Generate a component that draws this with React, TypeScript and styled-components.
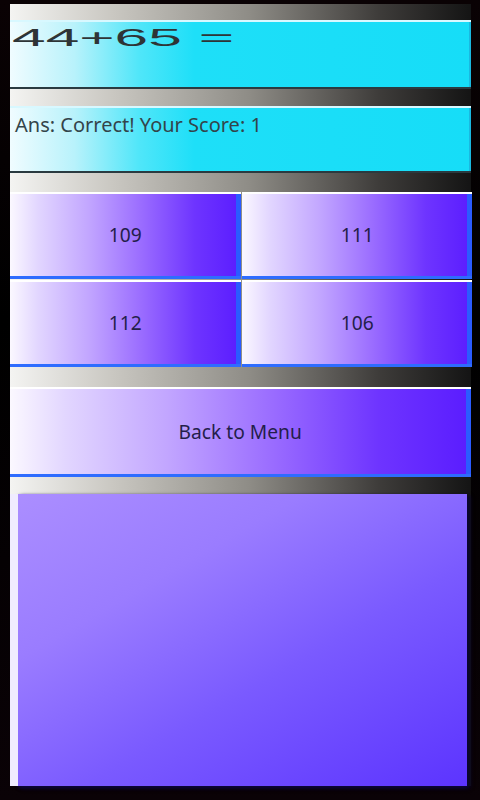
import React from 'react';
import styled, { createGlobalStyle } from 'styled-components';

const GlobalStyle = createGlobalStyle`
  html, body {
    margin: 0;
    padding: 0;
    background: #000;
  }
  body {
    font-family: "Noto Sans", "DejaVu Sans", sans-serif;
  }
`;

const Frame = styled.div`
  width: 480px;
  height: 800px;
  box-sizing: border-box;
  padding: 4px 9px 0 10px;
  background: linear-gradient(to bottom, #0a0204 0%, #000 40%, #0a0206 100%);
  overflow: hidden;
`;

const Screen = styled.div`
  height: 782px;
  display: flex;
  flex-direction: column;
  padding-top: 16px;
  box-sizing: border-box;
  background: linear-gradient(to right, #f4f4f2 0%, #cac8c2 22%, #8e8c86 52%, #3e3c3a 80%, #141414 100%);
`;

const InfoPanel = styled.div<{ $h: number }>`
  height: ${(p) => p.$h}px;
  flex-shrink: 0;
  box-sizing: border-box;
  background: linear-gradient(to right, #f0fcff 0%, #b8f2fb 14%, #50e6f9 28%, #1edff8 40%, #16ddf8 100%);
  box-shadow: inset 0 2px 0 #d8f8ff, inset 0 -2px 0 #2a3a40, inset -2px 0 0 #1ab8e0;
  overflow: hidden;
`;

const Question = styled.div`
  display: inline-block;
  margin: 4px 0 0 2px;
  font-family: "Liberation Sans", Arial, sans-serif;
  font-size: 24px;
  line-height: 28px;
  color: #2e3436;
  transform: scaleX(2.52);
  transform-origin: left center;
  white-space: pre;
`;

const Answer = styled.div`
  padding: 5px 0 0 5px;
  font-size: 20px;
  line-height: 28px;
  color: #33444a;
  white-space: nowrap;
`;

const Gap = styled.div<{ $h: number }>`
  height: ${(p) => p.$h}px;
  flex-shrink: 0;
`;

const Grid = styled.div`
  display: grid;
  grid-template-columns: 231px 230px;
  grid-template-rows: 87px 87px;
  column-gap: 1px;
  row-gap: 1px;
  flex-shrink: 0;
`;

const Button = styled.button<{ $h?: number }>`
  height: ${(p) => (p.$h ? `${p.$h}px` : '100%')};
  width: 100%;
  flex-shrink: 0;
  border: none;
  padding: 0;
  margin: 0;
  cursor: pointer;
  font-family: "Noto Sans", "DejaVu Sans", sans-serif;
  font-size: 20px;
  color: #241e4a;
  background: linear-gradient(
    to right,
    #fbf8ff 0%,
    #e2d6ff 12%,
    #c2a6ff 34%,
    #9a6cff 57%,
    #6e34ff 80%,
    #5a1cff 100%
  );
  box-shadow: inset 0 2px 0 #ffffff, inset 0 -3px 0 #2e6cff, inset -5px 0 0 #2a5cff;
`;

const Label = styled.span`
  display: inline-block;
  transform: scaleX(0.96);
  position: relative;
  top: -1px;
`;

const BottomPanel = styled.div`
  flex: 1;
  margin: 0 4px 0 8px;
  background: linear-gradient(150deg, #ab8eff 0%, #9a7cff 30%, #7a5aff 60%, #5c34ff 100%);
  box-shadow: -8px 0 0 #f0ecff, 0 2px 3px #0c0638, 3px 2px 4px #0a0530;
`;

const answers = ['109', '111', '112', '106'];

const App = () => {
  return (
    <>
      <GlobalStyle />
      <Frame>
        <Screen>
          <InfoPanel $h={69}>
            <Question>{'44+65 ='}</Question>
          </InfoPanel>
          <Gap $h={17} />
          <InfoPanel $h={67}>
            <Answer>Ans: Correct! Your Score: 1</Answer>
          </InfoPanel>
          <Gap $h={19} />
          <Grid>
            {answers.map((a) => (
              <Button key={a} type="button">
                <Label>{a}</Label>
              </Button>
            ))}
          </Grid>
          <Gap $h={20} />
          <Button type="button" $h={90}>
            <Label>Back to Menu</Label>
          </Button>
          <Gap $h={17} />
          <BottomPanel />
        </Screen>
      </Frame>
    </>
  );
};

export default App;
